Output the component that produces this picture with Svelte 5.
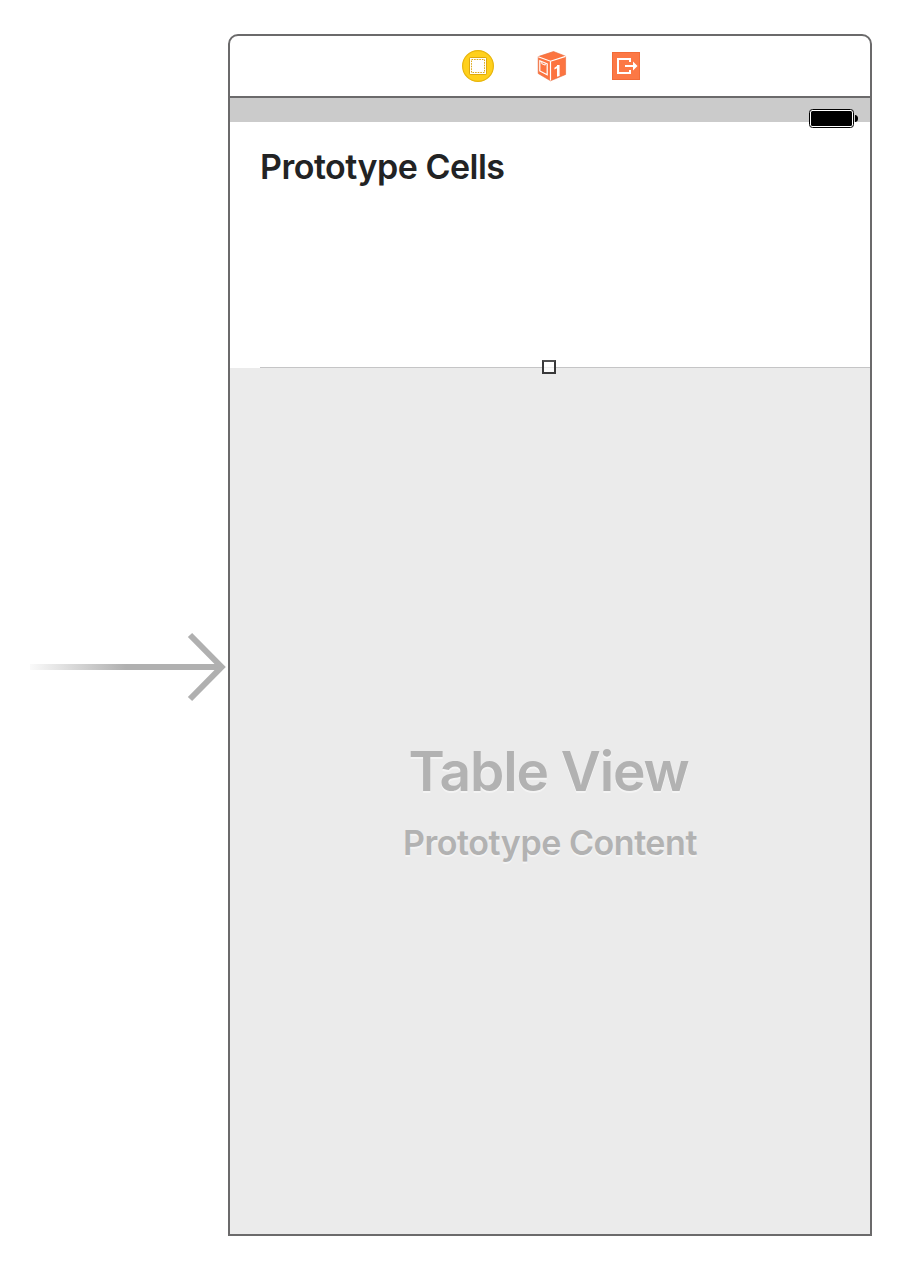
<script>
  const title = 'Table View';
  const subtitle = 'Prototype Content';
</script>

<main class="canvas">
  <div class="entry">
    <svg width="200" height="76" viewBox="0 0 200 76" aria-label="Initial scene">
      <defs>
        <linearGradient id="fade" gradientUnits="userSpaceOnUse" x1="2" y1="0" x2="98" y2="0">
          <stop offset="0" stop-color="#fafafa" />
          <stop offset="1" stop-color="#b0b0b0" />
        </linearGradient>
      </defs>
      <rect x="2" y="35" width="190" height="6" fill="url(#fade)" />
      <path d="M162 6L193.6 38L162 70" fill="none" stroke="#b0b0b0" stroke-width="6" />
    </svg>
  </div>

  <section class="scene">
    <header class="dock">
      <svg width="32" height="32" viewBox="0 0 32 32">
        <circle cx="16" cy="16" r="15.4" fill="#ffd01c" stroke="#e8b50c" stroke-width="1.2" />
        <rect x="7.5" y="7.5" width="17" height="17" rx="1" fill="#ffd01c" stroke="#dea80e" />
        <rect x="8" y="8" width="16" height="16" fill="#fff" />
        <rect x="9.5" y="9.5" width="13" height="13" fill="none" stroke="#dda81a" stroke-width="1" stroke-dasharray="1.6 1" />
      </svg>
      <svg width="32" height="32" viewBox="0 0 32 32">
        <path d="M17.5 1.5L29.6 6.2V24.5L14.5 30.8L2.2 23.5V6.6Z" fill="#fc7440" stroke="#e66a3b" stroke-width=".6" />
        <path d="M2.2 6.8L14.5 11.2L29.6 6.4M14.5 11.2V30.6" fill="none" stroke="#fff" stroke-width="1.2" />
        <path d="M3.8 10.8L11.2 13.8V24.8L3.8 21Z" fill="none" stroke="#fff" stroke-width="1.2" />
        <path d="M5.8 12V13.7L9.2 15.1V13.3" fill="none" stroke="#fff" stroke-width="1" />
        <path d="M18.4 17.8L21 16V14.9H23.6V26L21 26.8V18.2L18.4 19.6Z" fill="#fff" />
      </svg>
      <svg width="32" height="32" viewBox="0 0 32 32">
        <rect x="2.5" y="2.5" width="27" height="27" fill="#fc7845" stroke="#f26b37" />
        <path d="M20 12V9H8V23H20V20" fill="none" stroke="#fff" stroke-width="2" />
        <path d="M15 15H23V11.6L27.5 16L23 20.4V17H15Z" fill="#fff" />
      </svg>
    </header>

    <div class="status">
      <svg width="49" height="19" viewBox="0 0 49 19">
        <rect x=".5" y=".5" width="44" height="18" rx="3" fill="#fff" stroke="#000" />
        <rect x="2" y="2" width="41" height="15" rx="1.5" fill="#000" />
        <path d="M46 6H46.5Q49 6.5 49 9.5T46.5 13H46Z" fill="#000" />
      </svg>
    </div>

    <div class="cell">
      <h3>Prototype Cells</h3>
      <div class="separator"></div>
      <span class="handle"></span>
    </div>

    <div class="content">
      <h1>{title}</h1>
      <h2>{subtitle}</h2>
    </div>
  </section>
</main>

<style>
  :global(body) {
    background: #fff;
  }
  .canvas {
    box-sizing: border-box;
    display: flex;
    width: 922px;
    height: 1278px;
    padding: 34px 50px 42px 28px;
    font-family: Inter, sans-serif;
  }
  .entry {
    width: 200px;
    padding-top: 595px;
  }
  svg {
    display: block;
    flex: none;
  }
  .scene {
    box-sizing: border-box;
    display: flex;
    flex-direction: column;
    width: 644px;
    height: 1202px;
    border: 2px solid #6b6a6b;
    border-radius: 10px 10px 0 0;
    background: #fff;
  }
  .dock {
    display: flex;
    align-items: center;
    justify-content: center;
    gap: 42px;
    height: 60px;
    padding-left: 4px;
  }
  .status {
    display: flex;
    justify-content: flex-end;
    box-sizing: border-box;
    height: 26px;
    padding: 11px 12px 0 0;
    border-top: 2px solid #6b6a6b;
    background: #cbcbcb;
  }
  .cell {
    position: relative;
    display: flex;
    flex-direction: column;
    justify-content: space-between;
    height: 246px;
    padding-left: 30px;
  }
  h1, h2, h3 {
    margin: 0;
    font-weight: 600;
    white-space: nowrap;
  }
  h3 {
    padding-top: 25px;
    color: #222324;
    font-size: 34px;
    line-height: 40px;
    letter-spacing: -0.5px;
  }
  .separator {
    height: 1px;
    background: #c5c5c6;
  }
  .handle {
    position: absolute;
    bottom: -6px;
    left: 312px;
    box-sizing: border-box;
    width: 14px;
    height: 14px;
    border: 2px solid #383839;
    border-top-color: #505051;
    background: linear-gradient(#fff 0 5px, #ececec 5px 6px, #fafafa 6px);
  }
  .content {
    flex: 1;
    display: flex;
    flex-direction: column;
    align-items: center;
    padding-top: 371px;
    background: #ebebeb;
    color: #b2b2b2;
    text-shadow: 0 2px 0 #f4f4f4;
  }
  h1 {
    padding-right: 3px;
    font-size: 55px;
    line-height: 64px;
    letter-spacing: -1.1px;
  }
  h2 {
    padding-top: 20px;
    font-size: 34px;
    line-height: 40px;
    letter-spacing: -0.45px;
  }
</style>
